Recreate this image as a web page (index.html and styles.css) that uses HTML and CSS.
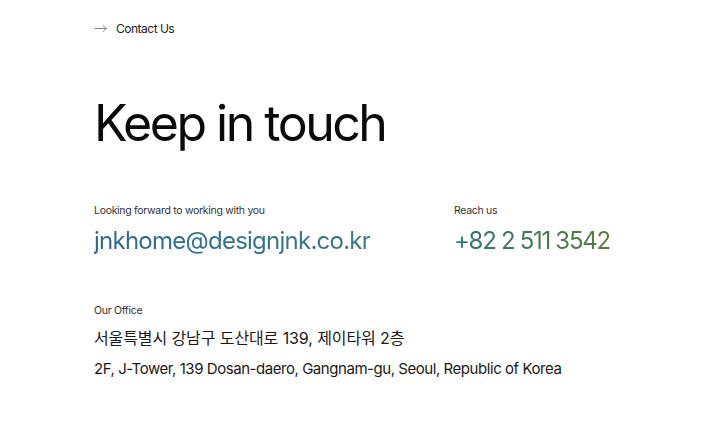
FILE: index.html
```html
<!DOCTYPE html>
<html lang="ko">
<head>
<meta charset="utf-8">
<link rel="stylesheet" href="styles.css">
</head>
<body>
<main class="contact">
  <div class="crumb">
    <svg class="arrow" width="13" height="10" viewBox="0 0 13 10" fill="none" stroke="#666" stroke-width="0.8">
      <path d="M0.5 5.5H12.3"/>
      <path d="M8.8 2.3L12.3 5.5L8.8 8.7"/>
    </svg>
    <span>Contact Us</span>
  </div>
  <h1 class="title">Keep in touch</h1>
  <div class="row">
    <div class="col col-mail">
      <p class="label">Looking forward to working with you</p>
      <a class="big mail">jnkhome@designjnk.co.kr</a>
    </div>
    <div class="col">
      <p class="label">Reach us</p>
      <a class="big phone">+82 2 511 3542</a>
    </div>
  </div>
  <div class="office">
    <p class="label">Our Office</p>
    <p class="addr ko">서울특별시 강남구 도산대로 139, 제이타워 2층</p>
    <p class="addr">2F, J-Tower, 139 Dosan-daero, Gangnam-gu, Seoul, Republic of Korea</p>
  </div>
</main>
</body>
</html>
```
FILE: styles.css
```css
* { box-sizing: border-box; margin: 0; padding: 0; }
body {
  background: #fff;
  font-family: Inter, "Noto Sans CJK KR", sans-serif;
  color: #111;
}
.contact {
  padding: 19px 0 0 94px;
  display: flex;
  flex-direction: column;
}
.crumb {
  display: flex;
  align-items: center;
  gap: 9px;
  font-size: 12px;
  letter-spacing: -0.5px;
  color: #222;
  height: 18px;
}
.arrow { display: block; margin-top: -1px; }
.title {
  margin-top: 56px;
  font-weight: 400;
  font-size: 50px;
  letter-spacing: -2.5px;
  line-height: 60px;
  color: #0a0a0a;
}
.row {
  margin-top: 51px;
  display: flex;
}
.col-mail { width: 360px; }
.label {
  font-size: 10.5px;
  letter-spacing: -0.3px;
  color: #333;
  line-height: 14px;
}
.big {
  display: inline-block;
  margin-top: 8px;
  font-size: 24px;
  letter-spacing: -0.75px;
  line-height: 30px;
  -webkit-background-clip: text;
  background-clip: text;
  color: transparent;
}
.mail { background-image: linear-gradient(90deg, #2c6897, #397a7d); }
.phone {
  letter-spacing: -1.3px;
  background-image: linear-gradient(90deg, #2d7572, #5a7d3a);
}
.office { margin-top: 48px; }
.addr {
  font-size: 15px;
  letter-spacing: -0.45px;
  color: #1a1a1a;
  line-height: 20px;
  margin-top: 11px;
}
.addr.ko { font-size: 16px; letter-spacing: -0.1px; }
.office .label + .addr { margin-top: 10px; }
```
